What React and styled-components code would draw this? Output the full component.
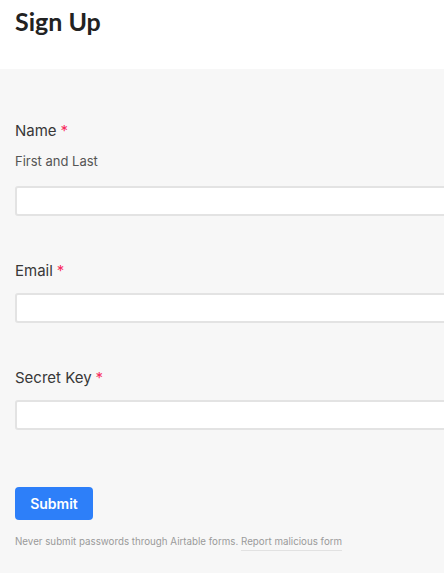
import React from "react";
import styled, { createGlobalStyle } from "styled-components";

const GlobalStyle = createGlobalStyle`
  html, body {
    margin: 0;
    padding: 0;
    overflow: hidden;
    background: #f7f7f7;
  }
  body {
    font-family: Inter, "Liberation Sans", sans-serif;
    -webkit-font-smoothing: antialiased;
  }
`;

const fields = [
  { label: "Name", description: "First and Last" },
  { label: "Email" },
  { label: "Secret Key" },
];

const App = () => {
  return (
    <Page>
      <GlobalStyle />
      <Header>
        <Title>Sign Up</Title>
      </Header>
      <FormBody>
        {fields.map((f) => (
          <Field key={f.label}>
            <Label hasDescription={!!f.description}>
              {f.label}
              <Required>*</Required>
            </Label>
            {f.description && <Description>{f.description}</Description>}
            <Input type="text" />
          </Field>
        ))}
        <SubmitButton>Submit</SubmitButton>
        <Footer>
          Never submit passwords through Airtable forms.{" "}
          <ReportLink>Report malicious form</ReportLink>
        </Footer>
      </FormBody>
    </Page>
  );
};

const Page = styled.div`
  width: 600px;
  min-height: 573px;
  background: #f7f7f7;
`;

const Header = styled.div`
  background: #ffffff;
  height: 69px;
  padding: 5px 15px 0;
  box-sizing: border-box;
`;

const Title = styled.h1`
  margin: 0;
  font-family: Lato, "Open Sans", sans-serif;
  font-weight: 700;
  font-size: 25px;
  line-height: 32px;
  color: #222222;
`;

const FormBody = styled.div`
  padding: 52px 15px 40px;
  display: flex;
  flex-direction: column;
  align-items: flex-start;
`;

const Field = styled.div`
  width: 100%;
  margin-bottom: 45px;
`;

const Label = styled.div`
  font-size: 15px;
  line-height: 20px;
  color: #383838;
  margin-bottom: ${(p) => (p.hasDescription ? "11px" : "12px")};
`;

const Required = styled.span`
  color: #f82b60;
  margin-left: 4px;
`;

const Description = styled.div`
  font-size: 13px;
  line-height: 18px;
  color: #555555;
  margin-bottom: 16px;
`;

const Input = styled.input`
  display: block;
  width: 100%;
  height: 30px;
  box-sizing: border-box;
  border: 2px solid #e3e3e3;
  border-radius: 3px;
  background: #ffffff;
  outline: none;
  padding: 0 8px;
`;

const SubmitButton = styled.button`
  margin-top: 12px;
  width: 78px;
  height: 33px;
  border: none;
  border-radius: 4px;
  background: #2d7ff9;
  color: #ffffff;
  font-family: Inter, "Liberation Sans", sans-serif;
  font-weight: 600;
  font-size: 14px;
  cursor: pointer;
`;

const Footer = styled.div`
  margin-top: 14px;
  font-size: 9.75px;
  line-height: 16px;
  color: #9a9a9a;
`;

const ReportLink = styled.span`
  padding-bottom: 3px;
  border-bottom: 1px solid #e2e2e2;
`;

export default App;
